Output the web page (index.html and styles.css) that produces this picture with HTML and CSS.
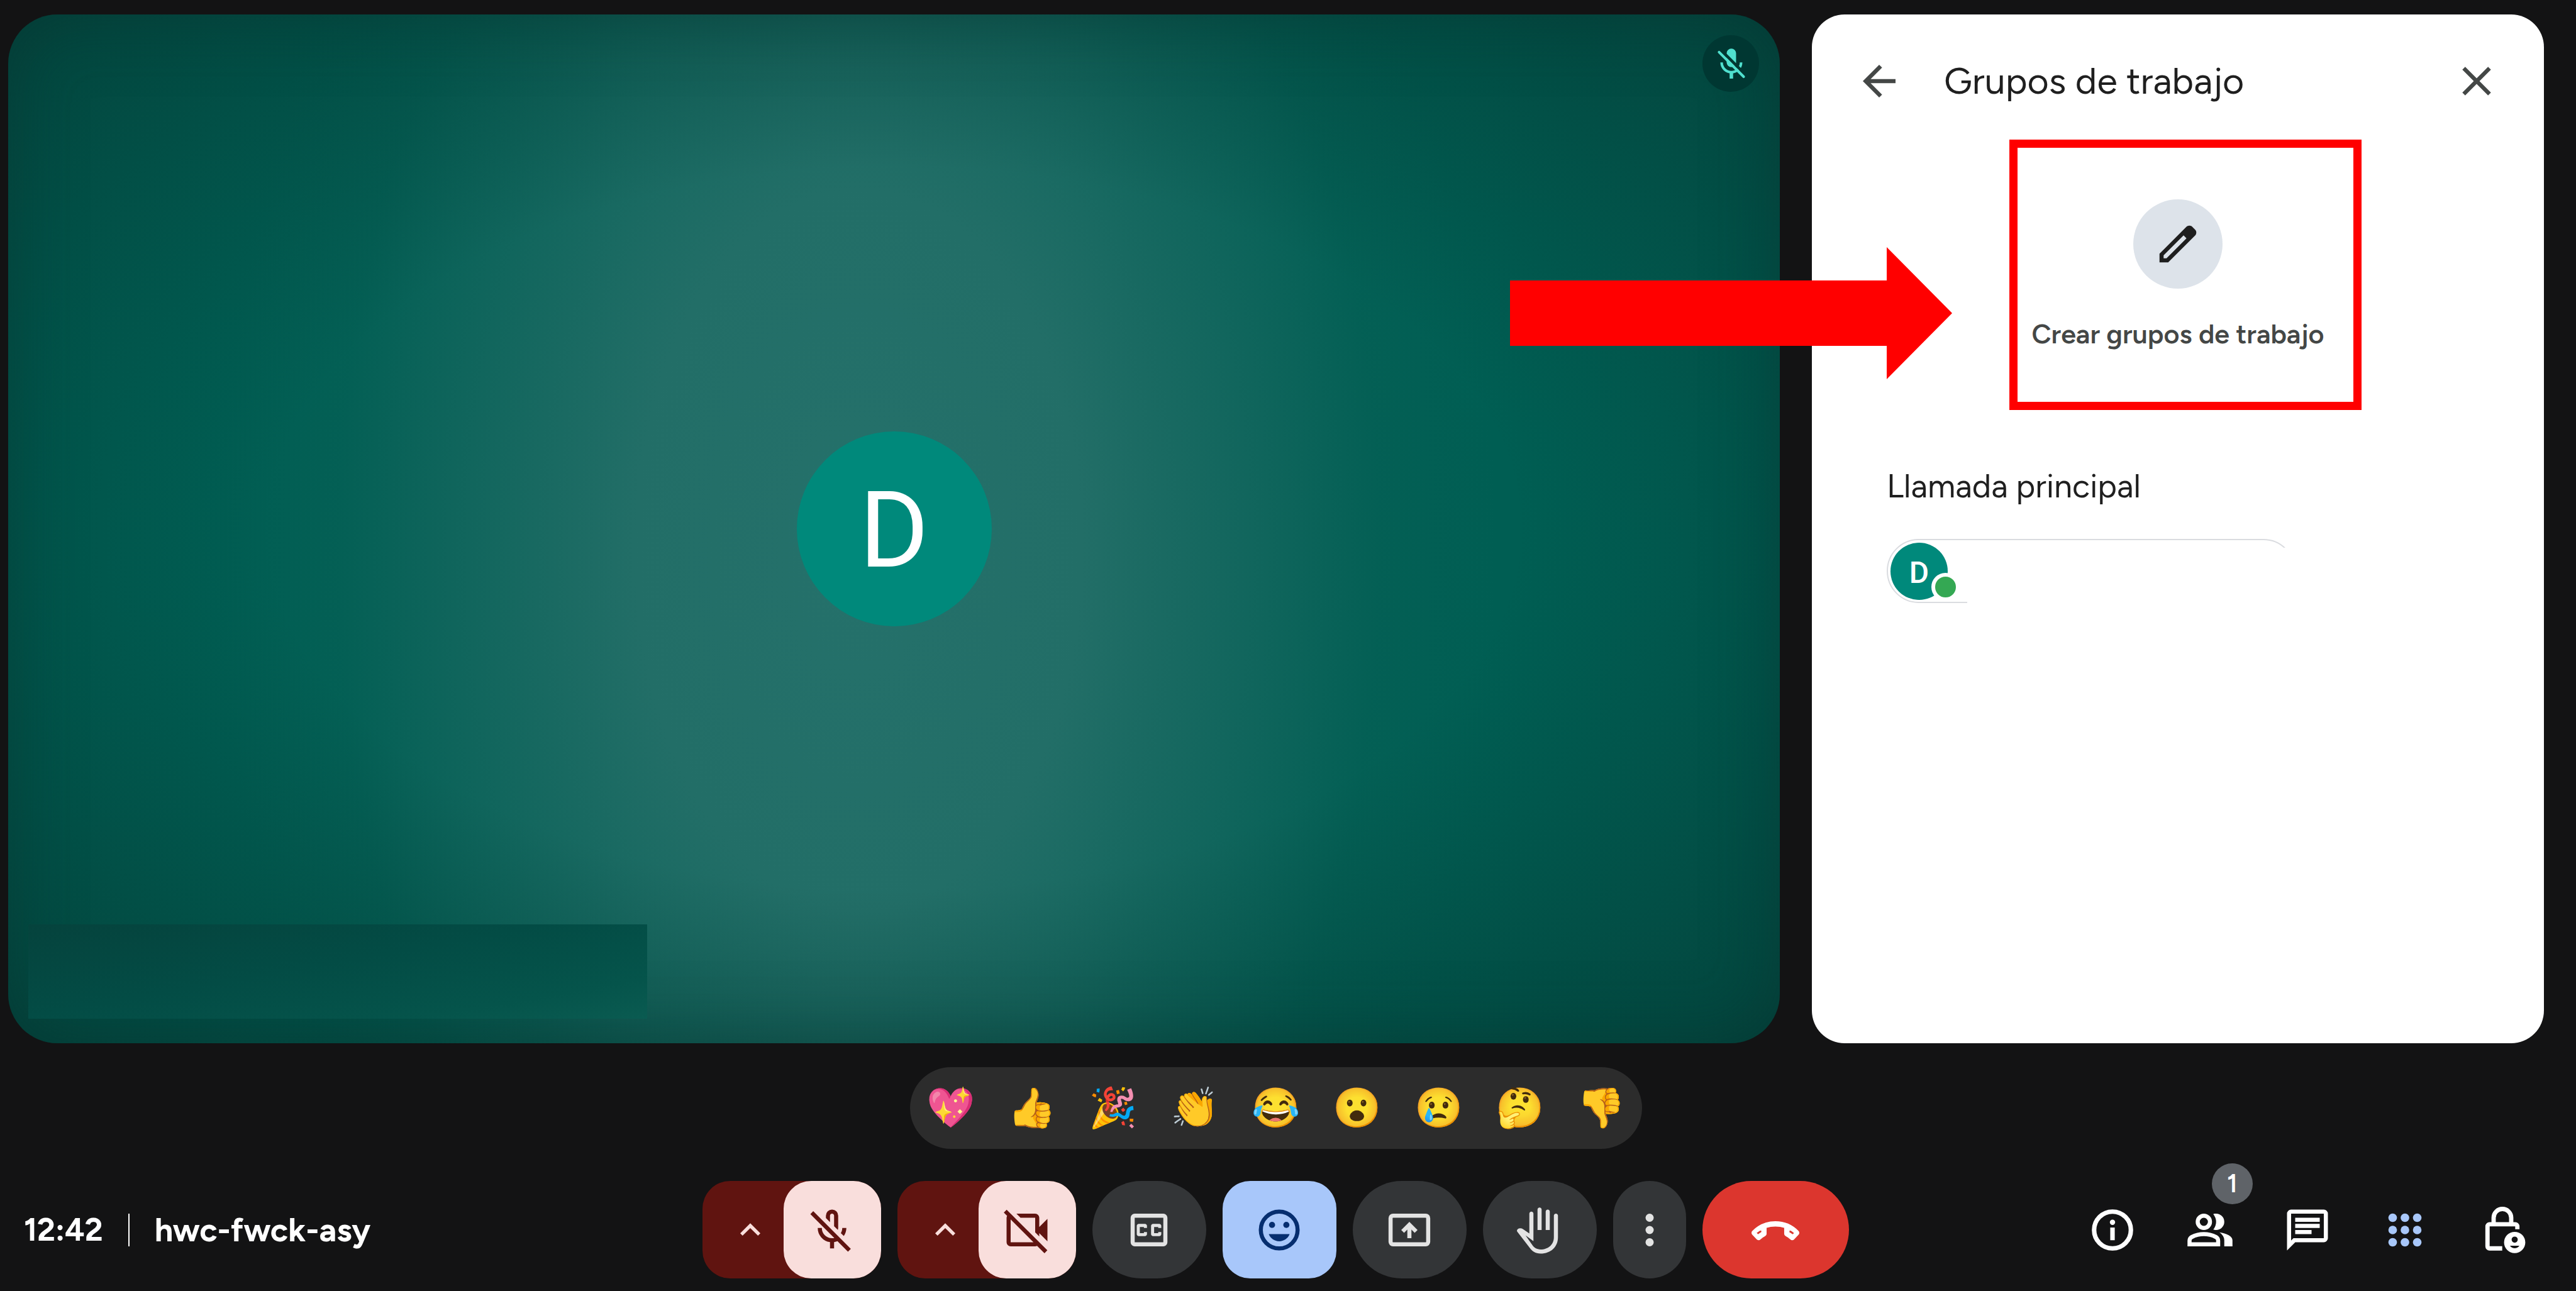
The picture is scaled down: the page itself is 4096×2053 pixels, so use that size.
FILE: index.html
```html
<!DOCTYPE html>
<html lang="es">
<head>
  <meta charset="utf-8">
  <meta name="viewport" content="width=device-width, initial-scale=1">
  <title>hwc-fwck-asy</title>
  <link rel="stylesheet" href="styles.css">
</head>
<body>
  <main class="stage">
    <section class="tile" aria-label="Participante">
      <div class="tile-avatar">D</div>
      <span class="tile-muted">
        <svg viewBox="0 0 24 24" aria-hidden="true">
          <mask id="cut"><path fill="#fff" d="M0 0h24v24H0z"/><path d="M4.8 2.4l18 18" stroke="#000" stroke-width="1.9"/></mask>
          <g mask="url(#cut)">
            <rect x="9.3" y="2.2" width="6.2" height="12.2" rx="3.1" fill="#50e0cf"/>
            <path d="M6 11.3a6.4 6.4 0 0 0 12.8 0" fill="none" stroke="#50e0cf" stroke-width="1.7"/>
          </g>
          <path d="M12.4 17.5v4.4" stroke="#50e0cf" stroke-width="2.3"/>
          <path d="M4.3 4.5l16.2 16.2" stroke="#50e0cf" stroke-width="1.7" stroke-linecap="round"/>
        </svg>
      </span>
      <div class="tile-name"></div>
    </section>

    <aside class="panel">
      <header class="panel-header">
        <button class="icon-button" type="button" aria-label="Atrás"><svg viewBox="0 -960 960 960"><path d="m313-440 224 224-57 56-320-320 320-320 57 56-224 224h487v80H313Z"/></svg></button>
        <h1 class="panel-title">Grupos de trabajo</h1>
        <button class="icon-button" type="button" aria-label="Cerrar"><svg viewBox="0 -960 960 960"><path d="m256-200-56-56 224-224-224-224 56-56 224 224 224-224 56 56-224 224 224 224-56 56-224-224-224 224Z"/></svg></button>
      </header>

      <button class="create" type="button">
        <span class="create-icon"><svg viewBox="0 -960 960 960"><path d="M200-200h57l391-391-57-57-391 391v57Zm-80 80v-170l528-527q12-11 26.5-17t30.5-6q16 0 31 6t26 18l55 56q12 11 17.5 26t5.5 30q0 16-5.5 30.5T817-647L290-120H120Z"/></svg></span>
        <span class="create-label">Crear grupos de trabajo</span>
      </button>

      <h2 class="room-title">Llamada principal</h2>
      <div class="chip">
        <span class="chip-avatar">D</span>
        <span class="chip-status"></span>
        <span class="chip-cover"></span>
      </div>

      <div class="highlight"></div>
      <svg class="pointer" viewBox="0 0 703 210" aria-hidden="true"><path d="M0 53h599V0l104 105-104 105v-53H0z"/></svg>
    </aside>
  </main>

  <div class="reactions">
    <button type="button">💖</button>
    <button type="button">👍</button>
    <button type="button">🎉</button>
    <button type="button">👏</button>
    <button type="button">😂</button>
    <button type="button">😮</button>
    <button type="button">😢</button>
    <button type="button">🤔</button>
    <button type="button">👎</button>
  </div>

  <footer class="bar">
    <div class="meeting">
      <time class="clock">12:42</time>
      <span class="divider"></span>
      <span class="code">hwc-fwck-asy</span>
    </div>

    <div class="controls">
      <div class="split">
        <button class="split-arrow" type="button" aria-label="Ajustes de audio"><svg viewBox="0 0 24 24"><path d="M7.41 15.41 12 10.83l4.59 4.58L18 14l-6-6-6 6z"/></svg></button>
        <button class="split-main" type="button" aria-label="Activar micrófono"><svg viewBox="0 -960 960 960"><path d="m710-362-58-58q14-23 21-48t7-52h80q0 44-13 83.5T710-362ZM592-482l-72-72v-206q0-17-11.5-28.5T480-800q-17 0-28.5 11.5T440-760v126l-80-80v-46q0-50 35-85t85-35q50 0 85 35t35 85v240q0 11-2.5 20t-5.5 18ZM440-120v-123q-104-14-172-93t-68-184h80q0 83 57.5 141.5T480-320q34 0 64.5-10.5T600-360l57 57q-29 23-63.5 39T520-243v123h-80Zm352 64L56-792l56-56 736 736-56 56Z"/></svg></button>
      </div>
      <div class="split">
        <button class="split-arrow" type="button" aria-label="Ajustes de vídeo"><svg viewBox="0 0 24 24"><path d="M7.41 15.41 12 10.83l4.59 4.58L18 14l-6-6-6 6z"/></svg></button>
        <button class="split-main" type="button" aria-label="Activar cámara"><svg viewBox="0 -960 960 960"><path d="M880-260 720-420v67l-80-80v-287H353l-80-80h367q33 0 56.5 23.5T720-720v180l160-160v440ZM822-26 26-822l56-56L878-82l-56 56ZM160-800l80 80h-80v480h480v-80l80 80q0 33-23.5 56.5T640-160H160q-33 0-56.5-23.5T80-240v-480q0-33 23.5-56.5T160-800Z"/></svg></button>
      </div>
      <button class="control" type="button" aria-label="Subtítulos"><svg viewBox="0 -960 960 960"><path d="M200-160q-33 0-56.5-23.5T120-240v-480q0-33 23.5-56.5T200-800h560q33 0 56.5 23.5T840-720v480q0 33-23.5 56.5T760-160H200Zm0-80h560v-480H200v480Zm80-120h120q17 0 28.5-11.5T440-400v-40h-60v20h-80v-120h80v20h60v-40q0-17-11.5-28.5T400-600H280q-17 0-28.5 11.5T240-560v160q0 17 11.5 28.5T280-360Zm280 0h120q17 0 28.5-11.5T720-400v-40h-60v20h-80v-120h80v20h60v-40q0-17-11.5-28.5T680-600H560q-17 0-28.5 11.5T520-560v160q0 17 11.5 28.5T560-360Z"/></svg></button>
      <button class="control active" type="button" aria-label="Enviar una reacción"><svg viewBox="0 0 24 24"><circle cx="12" cy="12" r="9" fill="none" stroke="currentColor" stroke-width="2"/><circle cx="8.5" cy="9.5" r="1.5"/><circle cx="15.5" cy="9.5" r="1.5"/><path d="M12 17.5c2.3 0 4.3-1.4 5.1-3.5H6.900c.8 2.100 2.800 3.500 5.100 3.500z"/></svg></button>
      <button class="control" type="button" aria-label="Presentar"><svg viewBox="0 0 24 24"><rect x="2.800" y="5" width="18.400" height="14" rx="1.200" fill="none" stroke="currentColor" stroke-width="2"/><path d="M12 8l-4 4 1.400 1.400 1.600-1.600V16h2v-4.200l1.600 1.600L16 12z"/></svg></button>
      <button class="control" type="button" aria-label="Levantar la mano"><svg viewBox="0 -960 960 960"><path d="M500-20C400-20 330-65 270-155L42-450q-14-22 6-42 18-18 46-22 34-3 60 15l126 86v-387q0-17 11.500-28.500T320-840q17 0 28.500 11.500T360-800v537L205-375l130 185c40 60 90 90 165 90 150 0 260-95 260-240v-420q0-17 11.500-28.500T800-800q17 0 28.500 11.500T840-760v420C840-150 700-20 500-20ZM440-480v-400q0-17 11.500-28.500T480-920q17 0 28.500 11.500T520-880v400h-80Zm160 0v-360q0-17 11.500-28.500T640-880q17 0 28.500 11.500T680-840v360h-80Z"/></svg></button>
      <button class="control narrow" type="button" aria-label="Más opciones"><svg viewBox="0 0 24 24"><circle cx="12" cy="6" r="2"/><circle cx="12" cy="12" r="2"/><circle cx="12" cy="18" r="2"/></svg></button>
      <button class="control leave" type="button" aria-label="Salir de la llamada"><svg viewBox="0 0 24 24"><path stroke="currentColor" stroke-width=".6" d="M18.590 11.520c1.050.51 2.040 1.150 2.960 1.910l-1.070 1.070c-.58-.47-1.210-.89-1.880-1.270v-1.710m-13.200 0v1.700c-.65.37-1.280.79-1.870 1.270l-1.070-1.070c.91-.75 1.900-1.380 2.940-1.900M12 8C7.460 8 3.700 9.780.900 12.670c-.18.18-.29.43-.29.71s.11.53.29.700l2.180 2.300c.18.18.43.29.71.29.27 0 .52-.1.700-.28.79-.73 1.380-1.180 2.350-1.670.33-.16.560-.51.560-.9v-3.100C8.850 10.250 10.400 10 12 10s3.150.25 4.590.73v3.100c0 .4.230.74.560.9.980.49 1.580.930 2.370 1.670.18.17.43.28.700.28.28 0 .53-.11.710-.29l2.180-2.300c.18-.18.29-.43.29-.71s-.11-.53-.29-.71C20.300 9.780 16.540 8 12 8z"/></svg></button>
    </div>

    <nav class="tools" aria-label="Herramientas">
      <button class="tool" type="button" aria-label="Detalles"><svg viewBox="0 0 24 24"><circle cx="12" cy="12" r="9" fill="none" stroke="currentColor" stroke-width="2.200"/><path d="M10.900 10.800h2.200V17h-2.200z"/><circle cx="12" cy="8.200" r="1.300"/></svg></button>
      <button class="tool" type="button" aria-label="Personas"><svg viewBox="0 -960 960 960"><path d="M40-160v-112q0-34 17.500-62.500T104-378q62-31 126-46.500T360-440q66 0 130 15.500T616-378q29 15 46.500 43.500T680-272v112H40Zm720 0v-120q0-44-24.500-84.500T666-434q51 6 96 20.500t84 35.500q36 20 55 44.500t19 53.500v120H760ZM360-480q-66 0-113-47t-47-113q0-66 47-113t113-47q66 0 113 47t47 113q0 66-47 113t-113 47Zm400-160q0 66-47 113t-113 47q-11 0-28-2.500t-28-5.500q27-32 41.500-71t14.500-81q0-42-14.500-81T544-792q14-5 28-6.500t28-1.500q66 0 113 47t47 113ZM120-240h480v-32q0-11-5.500-20T580-306q-54-27-109-40.500T360-360q-56 0-111 13.500T140-306q-9 5-14.500 14t-5.500 20v32Zm240-320q33 0 56.500-23.500T440-640q0-33-23.500-56.500T360-720q-33 0-56.500 23.500T280-640q0 33 23.500 56.500T360-560Z"/></svg><span class="badge">1</span></button>
      <button class="tool" type="button" aria-label="Chat"><svg viewBox="0 -960 960 960"><path d="M240-400h320v-80H240v80Zm0-120h480v-80H240v80Zm0-120h480v-80H240v80ZM80-80v-720q0-33 23.500-56.500T160-880h640q33 0 56.500 23.500T880-800v480q0 33-23.500 56.500T800-240H240L80-80Zm80-195 46-45h594v-480H160v525Z"/></svg></button>
      <button class="tool selected" type="button" aria-label="Actividades"><svg viewBox="0 0 24 24"><circle cx="6" cy="6" r="2.100"/><circle cx="12" cy="6" r="2.100"/><circle cx="18" cy="6" r="2.100"/><circle cx="6" cy="12" r="2.100"/><circle cx="12" cy="12" r="2.100"/><circle cx="18" cy="12" r="2.100"/><circle cx="6" cy="18" r="2.100"/><circle cx="12" cy="18" r="2.100"/><circle cx="18" cy="18" r="2.100"/></svg></button>
      <button class="tool" type="button" aria-label="Controles del organizador"><svg viewBox="0 0 24 24"><path d="M7.700 9V6a4.300 4.300 0 0 1 8.600 0v3M19.300 11.600V10.200a1 1 0 0 0-1-1H5.700a1 1 0 0 0-1 1V20a1 1 0 0 0 1 1h6.200" fill="none" stroke="currentColor" stroke-width="2.100"/><path fill-rule="evenodd" d="M18 12.900a5.200 5.200 0 1 0 0 10.400 5.200 5.200 0 0 0 0-10.400zm0 2.300a1.500 1.500 0 1 1 0 3 1.500 1.500 0 0 1 0-3zm-2.300 4.500h4.600a2.800 2.800 0 0 1-4.600 0z"/></svg></button>
    </nav>
  </footer>
</body>
</html>
```
FILE: styles.css
```css
* {
  box-sizing: border-box;
}

body {
  margin: 0;
  min-height: 100vh;
  display: flex;
  flex-direction: column;
  background: #131314;
  color: #fff;
  font-family: Figtree, "Google Sans", Lato, sans-serif;
}

button {
  border: 0;
  padding: 0;
  background: none;
  color: inherit;
  font: inherit;
  cursor: pointer;
}

svg {
  display: block;
  width: 78px;
  height: 78px;
  fill: currentColor;
}

/* Video tile and side panel */

.stage {
  flex: 1;
  display: flex;
  gap: 51px;
  padding: 23px 51px 0 13px;
}

.tile {
  position: relative;
  flex: 1;
  display: flex;
  align-items: center;
  justify-content: center;
  overflow: hidden;
  border-radius: 78px;
  background:
    radial-gradient(ellipse 78% 78% at 50% 50%, rgba(6, 55, 50, 0) 45%, rgba(6, 50, 45, .7) 100%),
    radial-gradient(ellipse 36% 100% at 48% 52%, #25716b 0%, #226e67 35%, rgba(24, 105, 97, .75) 60%, rgba(10, 98, 88, .35) 82%, rgba(0, 94, 83, 0) 100%),
    #005e53;
  box-shadow: inset 0 0 110px rgba(6, 50, 45, .5);
}

.tile-avatar {
  width: 310px;
  height: 310px;
  border-radius: 50%;
  background: #00897b;
  font: 400 168px/316px Roboto, sans-serif;
  text-align: center;
}

.tile-muted {
  position: absolute;
  top: 33px;
  right: 33px;
  width: 90px;
  height: 90px;
  padding: 16px;
  border-radius: 50%;
  background: #003732;
}

.tile-muted svg {
  width: 58px;
  height: 58px;
}

.tile-name {
  position: absolute;
  left: 32px;
  bottom: 39px;
  width: 984px;
  height: 150px;
  background: linear-gradient(170deg, #05433d 0%, #034c45 45%, #05544b 80%, #0a5b51 100%);
}

.panel {
  position: relative;
  width: 1164px;
  display: flex;
  flex-direction: column;
  align-items: flex-start;
  padding-top: 28px;
  border-radius: 52px;
  background: #fff;
  color: #1f1f1f;
}

.panel-header {
  align-self: stretch;
  display: flex;
  align-items: center;
  height: 155px;
  padding: 0 68px;
}

.icon-button {
  color: #444746;
}

.panel-title {
  flex: 1;
  margin: 0 0 0 64px;
  font-size: 59px;
  font-weight: 400;
  line-height: 72px;
}

.create {
  align-self: center;
  display: flex;
  flex-direction: column;
  align-items: center;
  gap: 46px;
  margin-top: 111px;
}

.create-icon {
  padding: 32px;
  border-radius: 50%;
  background: #dde3ea;
}

.create-label {
  color: #444746;
  font-size: 43px;
  font-weight: 600;
  line-height: 52px;
}

.room-title {
  margin: 184px 0 0 119px;
  font-size: 52px;
  font-weight: 400;
  line-height: 64px;
}

.chip {
  position: relative;
  width: 650px;
  height: 102px;
  margin: 52px 0 0 119px;
  padding: 4px;
  border: 2px solid #dadce0;
  border-radius: 51px;
}

.chip-avatar {
  display: block;
  width: 91px;
  height: 91px;
  border-radius: 50%;
  background: #00897b;
  color: #fff;
  font: 500 48px/95px Roboto, sans-serif;
  text-align: center;
}

.chip-status {
  position: absolute;
  left: 69px;
  top: 52px;
  width: 45px;
  height: 45px;
  border: 6px solid #fff;
  border-radius: 50%;
  background: #34a853;
}

.chip-cover {
  position: absolute;
  left: 126px;
  top: 12px;
  right: -4px;
  bottom: -4px;
  background: #fff;
}

.highlight {
  position: absolute;
  left: 314px;
  top: 199px;
  width: 560px;
  height: 430px;
  border: 13px solid #f00;
}

.pointer {
  position: absolute;
  left: -480px;
  top: 370px;
  width: 703px;
  height: 210px;
  fill: #f00;
}

/* Emoji strip */

.reactions {
  display: grid;
  grid-template-columns: repeat(9, 1fr);
  align-self: center;
  width: 1164px;
  height: 130px;
  margin: 38px 38px 51px 0;
  border-radius: 65px;
  background: #2c2c2c;
}

.reactions button {
  font: 62px/130px "Noto Color Emoji", sans-serif;
}

/* Bottom bar */

.bar {
  display: grid;
  grid-template-columns: 1fr auto 1fr;
  align-items: center;
  padding: 0 40px 20px 0;
}

.meeting {
  display: flex;
  align-items: center;
  gap: 40px;
  padding-left: 38px;
  font-weight: 700;
  line-height: 64px;
}

.clock {
  font-size: 50px;
}

.code {
  font-size: 52px;
}

.divider {
  width: 2px;
  height: 52px;
  background: #fff;
}

.controls {
  display: flex;
  gap: 26px;
}

.split {
  display: flex;
  border-radius: 44px;
  background: #601410;
}

.split-arrow {
  display: grid;
  place-items: center;
  width: 152px;
  color: #f9dedc;
}

.split-arrow svg {
  width: 64px;
  height: 64px;
}

.split-main {
  display: grid;
  place-items: center;
  width: 155px;
  height: 155px;
  margin-left: -23px;
  border-radius: 44px;
  background: #f9dedc;
  color: #601410;
}

.control {
  display: grid;
  place-items: center;
  width: 181px;
  height: 155px;
  border-radius: 78px;
  background: #333537;
  color: #e3e3e3;
}

.active {
  border-radius: 44px;
  background: #a8c7fa;
  color: #062e6f;
}

.narrow {
  width: 116px;
}

.leave {
  width: 233px;
  background: #dc362e;
  color: #fff;
}

.tools {
  display: flex;
  justify-content: flex-end;
}

.tool {
  position: relative;
  display: grid;
  place-items: center;
  width: 155px;
  height: 155px;
}

.selected {
  color: #a8c7fa;
}

.badge {
  position: absolute;
  top: -28px;
  right: 9px;
  width: 65px;
  height: 65px;
  border-radius: 50%;
  background: #5f6368;
  font-size: 40px;
  font-weight: 600;
  line-height: 65px;
}
```
